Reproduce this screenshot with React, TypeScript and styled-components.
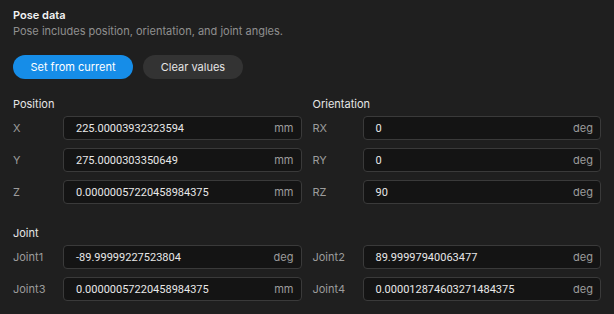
import React from "react";
import styled, { createGlobalStyle } from "styled-components";

const Global = createGlobalStyle`
  html, body { margin: 0; padding: 0; background: #1f1f1f; }
  body { font-family: Inter, "Noto Sans", sans-serif; -webkit-font-smoothing: antialiased; }
`;

const Panel = styled.div`
  width: 614px;
  height: 314px;
  box-sizing: border-box;
  padding: 7px 13px 0 13px;
  background: #1f1f1f;
  color: #e6e6e6;
  display: flex;
  flex-direction: column;
`;

const Title = styled.div`
  font-size: 11px;
  line-height: 16px;
  font-weight: 600;
  color: #f2f2f2;
`;

const Subtitle = styled.div`
  font-size: 11px;
  line-height: 16px;
  color: #8f8f8f;
`;

const Actions = styled.div`
  display: flex;
  gap: 10px;
  margin-top: 16px;
`;

const Button = styled.button<{ $primary?: boolean }>`
  height: 24px;
  width: ${(p) => (p.$primary ? "120px" : "100px")};
  padding: 0;
  border: none;
  border-radius: 12px;
  font-family: inherit;
  font-size: 11px;
  color: ${(p) => (p.$primary ? "#ffffff" : "#e6e6e6")};
  background: ${(p) => (p.$primary ? "#168de8" : "#333333")};
  cursor: pointer;
`;

const Grid = styled.div<{ $top: number }>`
  display: grid;
  grid-template-columns: 1fr 1fr;
  column-gap: 11px;
  margin-top: ${(p) => p.$top}px;
`;

const Column = styled.div`
  display: flex;
  flex-direction: column;
`;

const SectionLabel = styled.div`
  font-size: 11px;
  line-height: 16px;
  color: #e6e6e6;
  margin-bottom: 4px;
`;

const Rows = styled.div`
  display: flex;
  flex-direction: column;
  gap: 8px;
`;

const Row = styled.div`
  display: grid;
  grid-template-columns: 50px 1fr;
  align-items: center;
`;

const RowLabel = styled.span`
  font-size: 11px;
  color: #9c9c9c;
`;

const Field = styled.div`
  height: 24px;
  box-sizing: border-box;
  border: 1px solid #3a3a3a;
  border-radius: 4px;
  background: #141414;
  display: flex;
  align-items: center;
  padding: 0 7px 0 12px;
`;

const Value = styled.span`
  flex: 1;
  font-family: Roboto, Inter, sans-serif;
  font-size: 11px;
  color: #e8e8e8;
`;

const Unit = styled.span`
  font-size: 11px;
  color: #9c9c9c;
`;

type F = { label: string; value: string; unit: string };

const FieldRow = ({ label, value, unit }: F) => (
  <Row>
    <RowLabel>{label}</RowLabel>
    <Field>
      <Value>{value}</Value>
      <Unit>{unit}</Unit>
    </Field>
  </Row>
);

const position: F[] = [
  { label: "X", value: "225.00003932323594", unit: "mm" },
  { label: "Y", value: "275.0000303350649", unit: "mm" },
  { label: "Z", value: "0.00000057220458984375", unit: "mm" },
];
const orientation: F[] = [
  { label: "RX", value: "0", unit: "deg" },
  { label: "RY", value: "0", unit: "deg" },
  { label: "RZ", value: "90", unit: "deg" },
];
const jointLeft: F[] = [
  { label: "Joint1", value: "-89.99999227523804", unit: "deg" },
  { label: "Joint3", value: "0.00000057220458984375", unit: "mm" },
];
const jointRight: F[] = [
  { label: "Joint2", value: "89.99997940063477", unit: "deg" },
  { label: "Joint4", value: "0.000012874603271484375", unit: "deg" },
];

export default function App() {
  return (
    <>
      <Global />
      <Panel>
        <Title>Pose data</Title>
        <Subtitle>Pose includes position, orientation, and joint angles.</Subtitle>
        <Actions>
          <Button $primary>Set from current</Button>
          <Button>Clear values</Button>
        </Actions>
        <Grid $top={17}>
          <Column>
            <SectionLabel>Position</SectionLabel>
            <Rows>
              {position.map((f) => (
                <FieldRow key={f.label} {...f} />
              ))}
            </Rows>
          </Column>
          <Column>
            <SectionLabel>Orientation</SectionLabel>
            <Rows>
              {orientation.map((f) => (
                <FieldRow key={f.label} {...f} />
              ))}
            </Rows>
          </Column>
        </Grid>
        <Grid $top={21}>
          <Column>
            <SectionLabel>Joint</SectionLabel>
            <Rows>
              {jointLeft.map((f) => (
                <FieldRow key={f.label} {...f} />
              ))}
            </Rows>
          </Column>
          <Column>
            <SectionLabel>&nbsp;</SectionLabel>
            <Rows>
              {jointRight.map((f) => (
                <FieldRow key={f.label} {...f} />
              ))}
            </Rows>
          </Column>
        </Grid>
      </Panel>
    </>
  );
}
